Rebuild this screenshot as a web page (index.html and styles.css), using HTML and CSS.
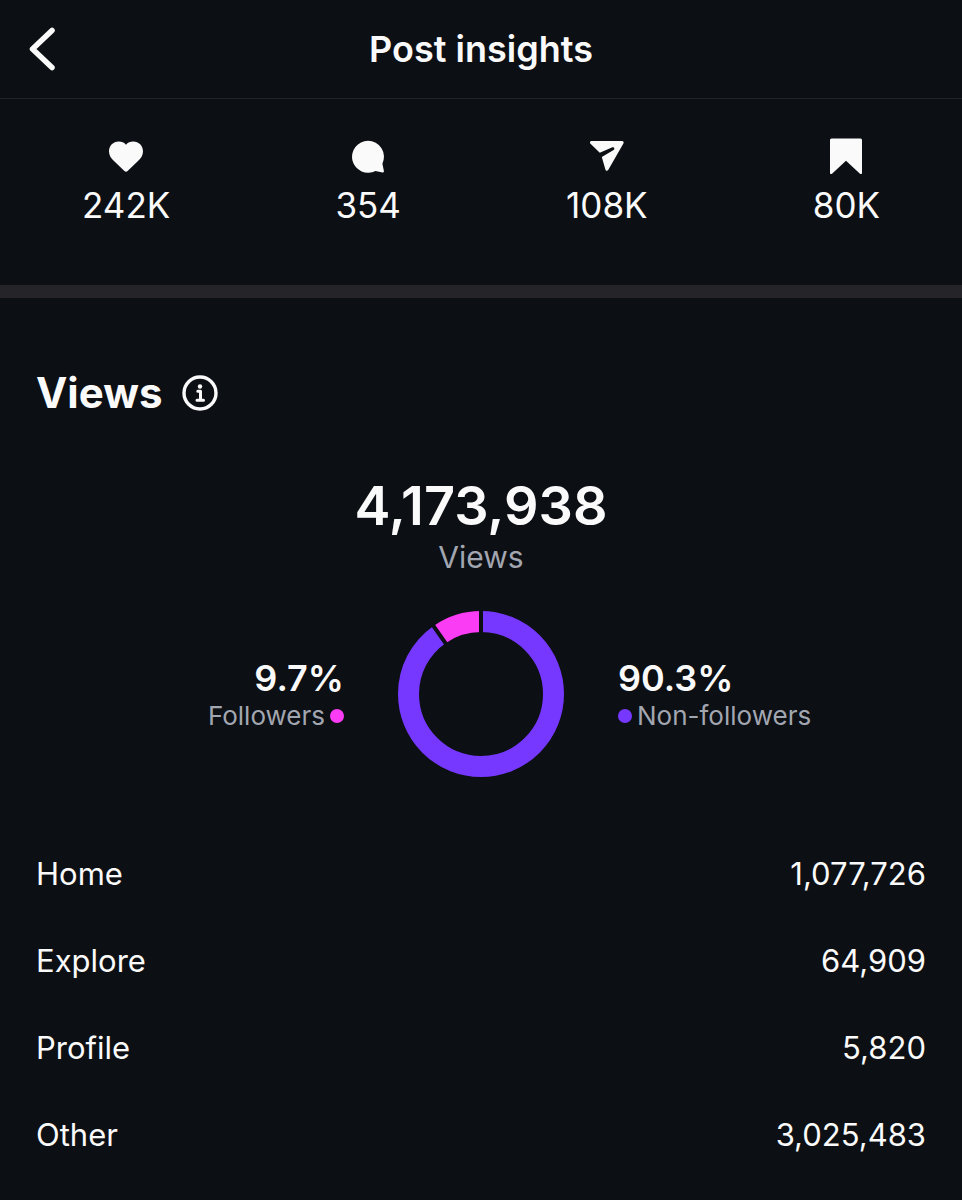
FILE: index.html
```html
<!DOCTYPE html>
<html lang="en">
<head>
    <meta charset="utf-8">
    <meta name="viewport" content="width=device-width, initial-scale=1">
    <title>Post insights</title>
    <link rel="stylesheet" href="styles.css">
</head>
<body>
    <header class="header">
        <button class="back" type="button" aria-label="Back">
            <svg width="28" height="44" viewBox="0 0 28 44">
                <path d="M24 3.500 4.500 22 24 40.500" fill="none" stroke="currentColor" stroke-width="5.500" stroke-linecap="round" stroke-linejoin="round"/>
            </svg>
        </button>
        <h1>Post insights</h1>
    </header>

    <section class="stats">
        <div class="stat">
            <svg width="36" height="36" viewBox="0 0 36 36" fill="currentColor">
                <path d="M18 6.800C19.700 4.600 22.300 3.500 25.200 3.500c5.700 0 9.800 4.300 9.800 9.900 0 4-2.200 7-5.500 10.100L19.600 33c-1 .9-2.200.9-3.200 0L6.500 23.500C3.200 20.400 1 17.400 1 13.400 1 7.800 5.100 3.500 10.800 3.500c2.900 0 5.500 1.100 7.200 3.300z"/>
            </svg>
            <span>242K</span>
        </div>
        <div class="stat">
            <svg width="36" height="36" viewBox="0 0 36 36" fill="currentColor">
                <path d="M18 2.800a16 16 0 1 0 7.600 30.100l6.900 1.500c.9.200 1.600-.6 1.400-1.500l-1.500-7.200A16 16 0 0 0 18 2.800z"/>
            </svg>
            <span>354</span>
        </div>
        <div class="stat">
            <svg width="36" height="36" viewBox="0 0 36 36" fill="currentColor">
                <path d="M2.600 3h30.400c1.400 0 2.100 1.400 1.400 2.600L19.200 32c-.8 1.300-2.500 1-2.800-.5L12.800 19 24.600 11.900c1.500-1 .6-3.300-1.200-2.600L10.800 14.700 1.500 5.800C.4 4.700 1 3 2.600 3z"/>
            </svg>
            <span>108K</span>
        </div>
        <div class="stat">
            <svg width="36" height="36" viewBox="0 0 36 36" fill="currentColor">
                <path d="M3.500.500h29a1.500 1.500 0 0 1 1.500 1.500v33c0 1.200-1.200 1.600-2 .8L18 22.800 4 35.800c-.8.800-2 .4-2-.8V2A1.500 1.500 0 0 1 3.500.500z"/>
            </svg>
            <span>80K</span>
        </div>
    </section>

    <main class="views">
        <div class="views-title">
            <h2>Views</h2>
            <button class="info" type="button" aria-label="About views">
                <svg width="36" height="36" viewBox="0 0 36 36">
                    <circle cx="18" cy="18" r="16" fill="none" stroke="currentColor" stroke-width="3.400"/>
                    <circle cx="18" cy="11.500" r="2.200" fill="currentColor"/>
                    <path d="M15.800 16.300h2.700v8.500M15 25.300h6.500" fill="none" stroke="currentColor" stroke-width="3" stroke-linecap="round" stroke-linejoin="round"/>
                </svg>
            </button>
        </div>

        <div class="total">
            <div class="total-value">4,173,938</div>
            <div class="total-label">Views</div>
        </div>

        <div class="split">
            <div class="share followers">
                <div class="share-value">9.7%</div>
                <div class="share-label">Followers <span class="dot"></span></div>
            </div>
            <svg class="donut" width="166" height="166" viewBox="0 0 166 166">
                <circle class="ring ring-non-followers" cx="83" cy="83" r="72.500" pathLength="100" stroke-dasharray="90.3 9.7" transform="rotate(-90 83 83)"/>
                <circle class="ring ring-followers" cx="83" cy="83" r="72.500" pathLength="100" stroke-dasharray="9.7 90.3" stroke-dashoffset="-90.3" transform="rotate(-90 83 83)"/>
                <!-- gaps between the two slices -->
                <path class="gap" d="M83 83V-2"/>
                <path class="gap" d="M83 83V-2" transform="rotate(-34.900 83 83)"/>
            </svg>
            <div class="share non-followers">
                <div class="share-value">90.3%</div>
                <div class="share-label"><span class="dot"></span>Non-followers</div>
            </div>
        </div>

        <table class="sources">
            <tr><th scope="row">Home</th><td>1,077,726</td></tr>
            <tr><th scope="row">Explore</th><td>64,909</td></tr>
            <tr><th scope="row">Profile</th><td>5,820</td></tr>
            <tr><th scope="row">Other</th><td>3,025,483</td></tr>
        </table>
    </main>
</body>
</html>
```

FILE: styles.css
```css
body {
    margin: 0;
    font-family: 'Inter', -apple-system, BlinkMacSystemFont, 'Segoe UI', Roboto, sans-serif;
    background: #0c0f14;
    color: #fafafa;
}
h1, h2 {
    margin: 0;
}
svg {
    display: block;
}
button {
    padding: 0;
    border: none;
    background: transparent;
    color: inherit;
    cursor: pointer;
}
.header {
    display: grid;
    grid-template-columns: 1fr auto 1fr;
    align-items: center;
    padding: 27px 28px;
    border-bottom: 1px solid #212429;
}
.back {
    justify-self: start;
}
h1 {
    font-size: 36px;
    font-weight: 600;
    line-height: 44px;
}
.stats {
    display: flex;
    justify-content: space-between;
    padding: 39px 82px 59px;
    border-bottom: 13px solid #242429;
}
.stat {
    display: flex;
    flex-direction: column;
    align-items: center;
    gap: 10px;
    font-size: 35px;
    line-height: 42px;
}
.views {
    padding: 68px 36px 0;
}
.views-title {
    display: flex;
    align-items: center;
    gap: 20px;
}
h2 {
    font-size: 42px;
    font-weight: 700;
    line-height: 54px;
}
.total {
    margin-top: 54px;
    text-align: center;
}
.total-value {
    font-size: 54px;
    font-weight: 600;
    line-height: 64px;
}
.total-label {
    font-size: 30px;
    line-height: 38px;
    color: #a2a6b0;
}
.split {
    display: grid;
    grid-template-columns: 1fr auto 1fr;
    align-items: center;
    gap: 54px;
    margin-top: 35px;
}
.ring {
    fill: none;
    stroke-width: 21px;
}
.ring-non-followers {
    stroke: #7638ff;
}
.ring-followers {
    stroke: #fa3cf5;
}
.gap {
    stroke: #0c0f14;
    stroke-width: 4px;
}
.share-value {
    font-size: 36px;
    font-weight: 600;
    line-height: 44px;
}
.share-label {
    display: flex;
    align-items: center;
    gap: 5px;
    font-size: 26px;
    line-height: 32px;
    color: #a2a6b0;
}
.followers {
    text-align: right;
}
.followers .share-label {
    justify-content: flex-end;
}
.dot {
    width: 14px;
    height: 14px;
    border-radius: 50%;
}
.followers .dot {
    background: #fa3cf5;
}
.non-followers .dot {
    background: #7638ff;
}
.sources {
    width: 100%;
    margin-top: 53px;
    border-collapse: collapse;
    font-size: 31px;
    line-height: 39px;
}
.sources th,
.sources td {
    padding: 24px 0;
    font-weight: 400;
    text-align: left;
}
.sources td {
    text-align: right;
}
```
